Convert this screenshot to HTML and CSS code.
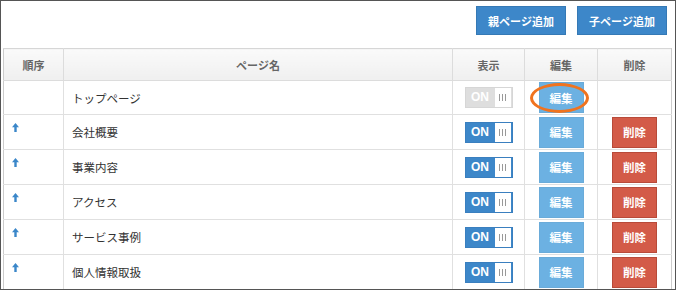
FILE: index.html
```html
<!DOCTYPE html>
<html lang="ja">
<head>
    <meta charset="UTF-8">
    <title>ページ管理</title>
    <link rel="stylesheet" href="styles.css">
</head>
<body>
    <div class="frame">
        <div class="toolbar">
            <button class="btn-add">親ページ追加</button>
            <button class="btn-add">子ページ追加</button>
        </div>

        <table class="pages">
            <thead>
                <tr>
                    <th class="col-order">順序</th>
                    <th class="col-name">ページ名</th>
                    <th class="col-show">表示</th>
                    <th class="col-edit">編集</th>
                    <th class="col-del">削除</th>
                </tr>
            </thead>
            <tbody>
                <tr class="first">
                    <td class="order"></td>
                    <td class="name">トップページ</td>
                    <td class="center"><span class="toggle disabled"><span class="on">ON</span><span class="knob"><i></i><i></i><i></i></span></span></td>
                    <td class="center mark-cell"><button class="btn-edit">編集</button><span class="mark"></span></td>
                    <td></td>
                </tr>
                <tr>
                    <td class="order"><svg class="up" width="7" height="9" viewBox="0 0 7 9"><path d="M3.5 0 L7 4.2 L4.7 4.2 L4.7 9 L2.3 9 L2.3 4.2 L0 4.2 Z"/></svg></td>
                    <td class="name">会社概要</td>
                    <td class="center"><span class="toggle"><span class="on">ON</span><span class="knob"><i></i><i></i><i></i></span></span></td>
                    <td class="center"><button class="btn-edit">編集</button></td>
                    <td class="center"><button class="btn-del">削除</button></td>
                </tr>
                <tr>
                    <td class="order"><svg class="up" width="7" height="9" viewBox="0 0 7 9"><path d="M3.5 0 L7 4.2 L4.7 4.2 L4.7 9 L2.3 9 L2.3 4.2 L0 4.2 Z"/></svg></td>
                    <td class="name">事業内容</td>
                    <td class="center"><span class="toggle"><span class="on">ON</span><span class="knob"><i></i><i></i><i></i></span></span></td>
                    <td class="center"><button class="btn-edit">編集</button></td>
                    <td class="center"><button class="btn-del">削除</button></td>
                </tr>
                <tr>
                    <td class="order"><svg class="up" width="7" height="9" viewBox="0 0 7 9"><path d="M3.5 0 L7 4.2 L4.7 4.2 L4.7 9 L2.3 9 L2.3 4.2 L0 4.2 Z"/></svg></td>
                    <td class="name">アクセス</td>
                    <td class="center"><span class="toggle"><span class="on">ON</span><span class="knob"><i></i><i></i><i></i></span></span></td>
                    <td class="center"><button class="btn-edit">編集</button></td>
                    <td class="center"><button class="btn-del">削除</button></td>
                </tr>
                <tr>
                    <td class="order"><svg class="up" width="7" height="9" viewBox="0 0 7 9"><path d="M3.5 0 L7 4.2 L4.7 4.2 L4.7 9 L2.3 9 L2.3 4.2 L0 4.2 Z"/></svg></td>
                    <td class="name">サービス事例</td>
                    <td class="center"><span class="toggle"><span class="on">ON</span><span class="knob"><i></i><i></i><i></i></span></span></td>
                    <td class="center"><button class="btn-edit">編集</button></td>
                    <td class="center"><button class="btn-del">削除</button></td>
                </tr>
                <tr>
                    <td class="order"><svg class="up" width="7" height="9" viewBox="0 0 7 9"><path d="M3.5 0 L7 4.2 L4.7 4.2 L4.7 9 L2.3 9 L2.3 4.2 L0 4.2 Z"/></svg></td>
                    <td class="name">個人情報取扱</td>
                    <td class="center"><span class="toggle"><span class="on">ON</span><span class="knob"><i></i><i></i><i></i></span></span></td>
                    <td class="center"><button class="btn-edit">編集</button></td>
                    <td class="center"><button class="btn-del">削除</button></td>
                </tr>
                <tr>
                    <td></td>
                    <td></td>
                    <td></td>
                    <td></td>
                    <td></td>
                </tr>
            </tbody>
        </table>
    </div>
</body>
</html>
```

FILE: styles.css
```css
body {
    margin: 0;
    background: #fff;
    font-family: "Liberation Sans", Arial, "Noto Sans CJK JP", sans-serif;
    color: #333;
}
.frame {
    width: 676px;
    height: 290px;
    box-sizing: border-box;
    border: 1px solid #555;
    padding: 0 4px 0 2px;
    overflow: hidden;
}
.toolbar {
    display: flex;
    justify-content: flex-end;
    gap: 11px;
    padding: 5px 4px 0 0;
    margin-bottom: 13px;
}
button {
    font-family: "Noto Sans CJK JP", sans-serif;
    font-weight: bold;
    color: #fff;
    cursor: pointer;
    padding: 0;
}
.btn-add {
    width: 90px;
    height: 29px;
    font-size: 11px;
    background-color: #3d87c9;
    border: 1px solid #3579b5;
}
.pages {
    width: 669px;
    border-collapse: collapse;
    table-layout: fixed;
    font-family: "Noto Sans CJK JP", sans-serif;
    font-size: 11px;
}
.pages th,
.pages td {
    border: 1px solid #e0e0e0;
    padding: 0;
}
.pages th {
    height: 31px;
    background: linear-gradient(#fafafa, #efefef);
    color: #666;
    font-weight: bold;
    font-size: 11px;
    border-color: #d6d6d6 #dcdcdc #dcdcdc;
}
.pages thead tr {
    border-top: 1px solid #ccc;
}
.col-order { width: 59px; }
.col-name { width: 388px; }
.col-show { width: 71px; }
.col-edit { width: 72px; }
.col-del { width: 73px; }
.pages tbody tr {
    height: 35px;
}
.pages tbody tr.first {
    height: 34px;
}
.pages td.name {
    padding-left: 8px;
    font-size: 11.5px;
    color: #333;
}
.pages td.center {
    text-align: center;
}
.pages tr > :first-child {
    border-left-color: #ccc;
}
.pages tr > :last-child {
    border-right-color: #ccc;
}
.pages td.order {
    vertical-align: top;
    padding-top: 8px;
}
.up {
    display: block;
    margin-left: 8px;
    fill: #3b87c9;
}
.toggle {
    display: inline-flex;
    vertical-align: middle;
    width: 48px;
    height: 21px;
    box-sizing: border-box;
    border: 1px solid #3a7fbf;
    background: #3d87c9;
    font-family: "Liberation Sans", Arial, sans-serif;
    font-weight: bold;
    font-size: 12px;
}
.toggle .on {
    flex: 1;
    color: #fff;
    line-height: 19px;
    text-align: center;
}
.toggle .knob {
    display: flex;
    align-items: center;
    justify-content: center;
    gap: 2px;
    width: 16px;
    margin: 0 1px 0 0;
    background: #fff;
}
.toggle .knob i {
    width: 1px;
    height: 7px;
    background: #999;
}
.toggle.disabled {
    background: #dedede;
    border-color: #d6d6d6;
}
.btn-edit,
.btn-del {
    width: 45px;
    height: 31px;
    font-size: 11.5px;
    vertical-align: middle;
}
.btn-edit {
    background-color: #6cb1e2;
    border: 1px solid #6aabd9;
}
.btn-del {
    background-color: #d35b48;
    border: 1px solid #b84a39;
}
.mark-cell {
    position: relative;
}
.mark {
    position: absolute;
    left: 5px;
    top: 2px;
    width: 59px;
    height: 30px;
    box-sizing: border-box;
    border: 3px solid #f0731f;
    border-radius: 50%;
}
```
